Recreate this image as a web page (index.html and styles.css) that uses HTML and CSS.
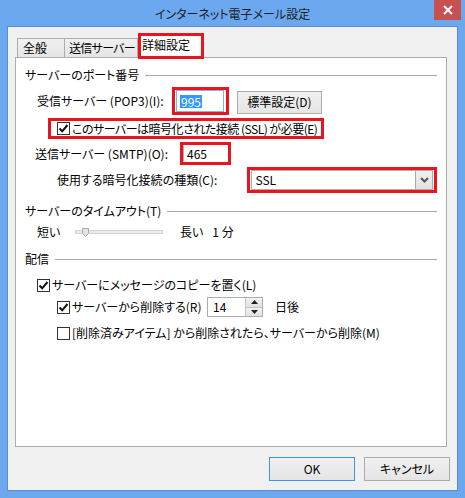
FILE: index.html
```html
<!DOCTYPE html>
<html lang="ja">
<head>
  <meta charset="UTF-8">
  <title>インターネット電子メール設定</title>
  <link rel="stylesheet" href="styles.css">
</head>
<body>
<div class="window">
  <div class="titlebar">
    <span class="title">インターネット電子メール設定</span>
    <span class="close">
      <svg width="10" height="10" viewBox="0 0 10 10"><path d="M1 1L9 9M9 1L1 9" stroke="#fff" stroke-width="2"/></svg>
    </span>
  </div>

  <div class="client">
    <div class="tabs">
      <div class="tab tab-general">全般</div>
      <div class="tab tab-send">送信サーバー</div>
      <div class="tab tab-active">詳細設定</div>
    </div>

    <div class="panel">
      <!-- ポート番号 -->
      <div class="group"><span>サーバーのポート番号</span><span class="group-line"></span></div>

      <div class="row row-pop">
        <span class="label label-pop">受信サーバー (POP3)(I):</span>
        <span class="mark mark-pop">
          <span class="textbox focused"><span class="selected">995</span></span>
        </span>
        <span class="btn btn-default">標準設定(D)</span>
      </div>

      <div class="row row-ssl">
        <span class="mark mark-ssl">
          <span class="check">
            <svg width="11" height="11" viewBox="0 0 11 11"><path d="M1.5 5.5L4.2 8.3L9.5 2" fill="none" stroke="#111" stroke-width="2"/></svg>
          </span>
          <span class="check-text ssl-text">このサーバーは暗号化された接続 (SSL) が必要(E)</span>
        </span>
      </div>

      <div class="row row-smtp">
        <span class="label label-smtp">送信サーバー (SMTP)(O):</span>
        <span class="mark mark-smtp">
          <span class="textbox">465</span>
        </span>
      </div>

      <div class="row row-enc">
        <span class="label label-enc">使用する暗号化接続の種類(C):</span>
        <span class="mark mark-enc">
          <span class="select">
            <span class="select-value">SSL</span>
            <span class="select-btn">
              <svg width="9" height="6" viewBox="0 0 9 6"><path d="M1 1L4.5 4.5L8 1" fill="none" stroke="#555" stroke-width="2"/></svg>
            </span>
          </span>
        </span>
      </div>

      <!-- タイムアウト -->
      <div class="group group-timeout"><span>サーバーのタイムアウト(T)</span><span class="group-line"></span></div>

      <div class="row row-slider">
        <span class="label label-short">短い</span>
        <span class="track">
          <svg class="thumb" width="7" height="9" viewBox="0 0 7 9"><path d="M0.5 0.5H6.5V5.5L3.5 8.5L0.5 5.5Z" fill="#e3e3e3" stroke="#a8a8a8"/></svg>
        </span>
        <span class="label-long">長い</span>
        <span class="minutes">1 分</span>
      </div>

      <!-- 配信 -->
      <div class="group group-delivery"><span>配信</span><span class="group-line"></span></div>

      <div class="row row-copy">
        <span class="check check-l1">
          <svg width="11" height="11" viewBox="0 0 11 11"><path d="M1.5 5.5L4.2 8.3L9.5 2" fill="none" stroke="#111" stroke-width="2"/></svg>
        </span>
        <span class="check-text">サーバーにメッセージのコピーを置く(L)</span>
      </div>

      <div class="row row-delete">
        <span class="check check-l2">
          <svg width="11" height="11" viewBox="0 0 11 11"><path d="M1.5 5.5L4.2 8.3L9.5 2" fill="none" stroke="#111" stroke-width="2"/></svg>
        </span>
        <span class="check-text label-delete">サーバーから削除する(R)</span>
        <span class="spin">
          <span class="spin-value">14</span>
          <span class="spin-btns">
            <span class="spin-btn"><svg width="7" height="4" viewBox="0 0 7 4"><path d="M0 4L3.5 0L7 4Z" fill="#222"/></svg></span>
            <span class="spin-btn"><svg width="7" height="4" viewBox="0 0 7 4"><path d="M0 0L3.5 4L7 0Z" fill="#222"/></svg></span>
          </span>
        </span>
        <span class="days">日後</span>
      </div>

      <div class="row row-trash">
        <span class="check check-l2"></span>
        <span class="check-text">[削除済みアイテム] から削除されたら、サーバーから削除(M)</span>
      </div>
    </div>

    <div class="footer">
      <span class="btn btn-ok">OK</span>
      <span class="btn btn-cancel">キャンセル</span>
    </div>
  </div>
</div>
</body>
</html>
```

FILE: styles.css
```css
body {
  margin: 0;
  font-family: "Noto Sans CJK JP", "Noto Sans", sans-serif;
  font-size: 12px;
  line-height: 16px;
  font-feature-settings: "palt";
  color: #000;
  background-color: #6ba8f0;
}

.window {
  width: 465px;
  height: 498px;
  box-sizing: border-box;
  background-color: #6ba8f0;
  padding: 0 7px;
  overflow: hidden;
}

.titlebar {
  position: relative;
  height: 26px;
  display: flex;
  justify-content: center;
  align-items: center;
}

.title {
  color: #1e1e1e;
  font-size: 12px;
  margin-top: 1px;
}

.close {
  position: absolute;
  top: 0;
  right: -3px;
  width: 27px;
  height: 20px;
  background-color: #c75050;
  display: flex;
  align-items: center;
  justify-content: center;
}

.client {
  height: 465px;
  box-sizing: border-box;
  border: 1px solid #5d8ccb;
  background-color: #f0f0f0;
  padding: 6px 7px 0 7px;
}

/* タブ */
.tabs {
  display: flex;
  align-items: flex-end;
  height: 24px;
  margin-left: 2px;
  white-space: nowrap;
}

.tab {
  height: 19px;
  box-sizing: border-box;
  border: 1px solid #adadad;
  border-bottom: none;
  background: linear-gradient(#f0f0f0, #e5e5e5);
  padding-left: 5px;
  line-height: 18px;
}

.tab-general {
  width: 48px;
}

.tab-send {
  width: 74px;
  margin-left: -1px;
  padding-left: 4px;
  letter-spacing: -0.7px;
}

.tab-active {
  position: relative;
  z-index: 1;
  width: 66px;
  height: 26px;
  margin-bottom: -2px;
  border: 3px solid #e8141f;
  background: #fff;
  padding-left: 1px;
  line-height: 18px;
}

.panel {
  height: 390px;
  box-sizing: border-box;
  margin-right: 3px;
  background-color: #fff;
  border: 1px solid #adadad;
  padding: 9px 9px 0 9px;
}

.group {
  display: flex;
  align-items: center;
  height: 16px;
  white-space: nowrap;
}

.group-line {
  flex: 1;
  margin-left: 6px;
  border-top: 1px solid #a9a9a9;
}

.group-timeout {
  margin-top: 10px;
}

.group-delivery {
  margin-top: 11px;
}

.row {
  display: flex;
  align-items: center;
  white-space: nowrap;
}

.mark {
  box-sizing: border-box;
  border: 3px solid #e8141f;
  display: flex;
  align-items: center;
}

.textbox {
  box-sizing: border-box;
  background: #fff;
  border: 1px solid #abadb3;
  display: flex;
  align-items: center;
  padding-left: 3px;
}

.textbox.focused {
  border-color: #7eb4ea;
}

.selected {
  background-color: #3399ff;
  color: #fff;
  line-height: 13px;
  padding: 0 1px;
}

.btn {
  box-sizing: border-box;
  border: 1px solid #acacac;
  background: linear-gradient(#f0f0f0, #e5e5e5);
  display: flex;
  align-items: center;
  justify-content: center;
}

/* POP3 */
.row-pop {
  margin-top: 4px;
  height: 28px;
}

.label-pop {
  margin-left: 12px;
  width: 135px;
}

.mark-pop {
  width: 57px;
  height: 28px;
  padding-left: 1px;
}

.mark-pop .textbox {
  width: 48px;
  height: 22px;
}

.btn-default {
  margin-left: 8px;
  width: 85px;
  height: 23px;
  margin-top: 2px;
}

/* SSL */
.row-ssl {
  margin-top: 3px;
  height: 21px;
}

.mark-ssl {
  margin-left: 23px;
  width: 276px;
  height: 21px;
  padding-left: 6px;
}

.ssl-text {
  margin-left: 1px;
  letter-spacing: -0.5px;
}

.check {
  width: 13px;
  height: 13px;
  box-sizing: border-box;
  border: 1px solid #333;
  background: #fff;
  display: flex;
  align-items: center;
  justify-content: center;
  flex-shrink: 0;
}

.check-text {
  margin-left: 2px;
}

/* SMTP */
.row-smtp {
  margin-top: 3px;
  height: 23px;
}

.label-smtp {
  margin-left: 10px;
  width: 145px;
}

.mark-smtp {
  width: 51px;
  height: 23px;
}

.mark-smtp .textbox {
  width: 45px;
  height: 17px;
  border-right: none;
  border-top-color: #fff;
  border-bottom-color: #fff;
  padding-left: 3px;
}

/* 暗号化 */
.row-enc {
  margin-top: 2px;
  height: 26px;
}

.label-enc {
  margin-left: 32px;
  width: 192px;
}

.mark-enc {
  width: 191px;
  height: 26px;
  padding: 0 1px;
}

.select {
  flex: 1;
  height: 20px;
  box-sizing: border-box;
  border: 1px solid #acacac;
  background: #fff;
  display: flex;
  align-items: center;
  justify-content: space-between;
}

.select-value {
  padding-left: 3px;
}

.select-btn {
  width: 17px;
  height: 18px;
  box-sizing: border-box;
  border-left: 1px solid #acacac;
  background: linear-gradient(#f0f0f0, #e2e2e2);
  display: flex;
  align-items: center;
  justify-content: center;
}

/* スライダー */
.row-slider {
  margin-top: 5px;
  height: 16px;
}

.label-short {
  margin-left: 12px;
  width: 38px;
}

.track {
  position: relative;
  width: 88px;
  height: 4px;
  box-sizing: border-box;
  background: #e7eaea;
  border: 1px solid #d6d6d6;
}

.thumb {
  position: absolute;
  left: 6px;
  top: -3px;
}

.label-long {
  margin-left: 17px;
}

.minutes {
  margin-left: 9px;
}

/* 配信 */
.row-copy {
  margin-top: 10px;
  height: 16px;
}

.check-l1 {
  margin-left: 12px;
}

.check-l2 {
  margin-left: 32px;
}

.row-delete {
  margin-top: 4px;
  height: 20px;
}

.label-delete {
  width: 135px;
}

.spin {
  width: 56px;
  height: 20px;
  box-sizing: border-box;
  border: 1px solid #abadb3;
  display: flex;
  justify-content: space-between;
}

.spin-value {
  padding-left: 5px;
  line-height: 18px;
}

.spin-btns {
  width: 16px;
  display: flex;
  flex-direction: column;
  border-left: 1px solid #c4c4c4;
}

.spin-btn {
  flex: 1;
  display: flex;
  align-items: center;
  justify-content: center;
  background: linear-gradient(#f2f2f2, #e2e2e2);
  border-bottom: 1px solid #c4c4c4;
}

.spin-btn:last-child {
  border-bottom: none;
}

.days {
  margin-left: 12px;
}

.row-trash {
  margin-top: 8px;
  height: 16px;
}

/* ボタン */
.footer {
  display: flex;
  justify-content: flex-end;
  gap: 9px;
  margin-top: 10px;
}

.btn-ok,
.btn-cancel {
  width: 86px;
  height: 24px;
}

.btn-ok {
  border-color: #3c94e6;
}
```
